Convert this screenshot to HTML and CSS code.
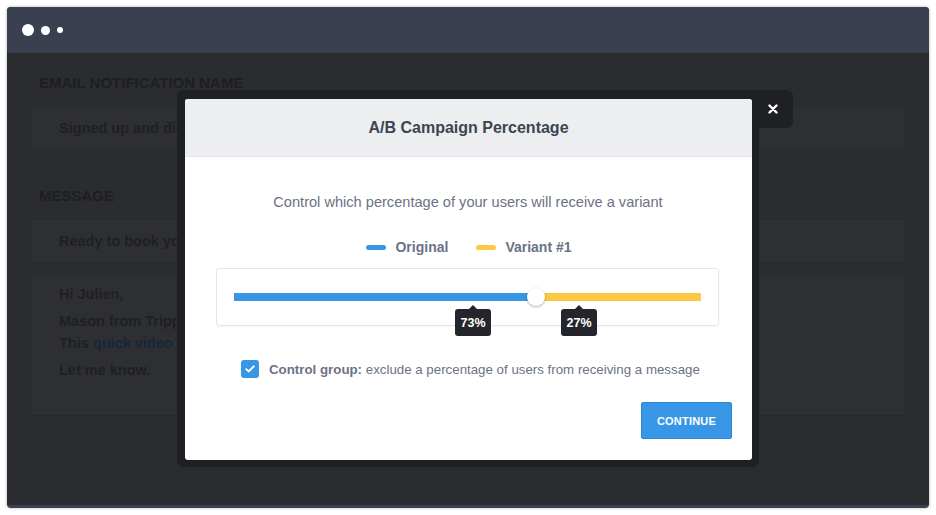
FILE: index.html
```html
<!DOCTYPE html>
<html lang="en">
<head>
    <meta charset="UTF-8">
    <title>A/B Campaign Percentage</title>
    <link rel="stylesheet" href="styles.css">
</head>
<body>
    <div class="window">
        <div class="titlebar">
            <span class="dot big"></span>
            <span class="dot mid"></span>
            <span class="dot small"></span>
        </div>
        <div class="content">
            <div class="section">
                <div class="label">Email notification name</div>
                <div class="field">Signed up and did not book a trip</div>
            </div>
            <div class="section">
                <div class="label">Message</div>
                <div class="field">Ready to book your trip?</div>
                <div class="field big">
                    <p>Hi Julien,</p>
                    <p class="tight">Mason from Trippy here. Thanks for signing up!</p>
                    <p>This <span class="link">quick video</span> will show you how to book in minutes.</p>
                    <p>Let me know.</p>
                </div>
            </div>

            <div class="modal-frame">
                <div class="close-tab">
                    <svg width="10" height="10" viewBox="0 0 10 10"><path d="M1.5 1.5 L8.5 8.5 M8.5 1.5 L1.5 8.5" stroke="#fff" stroke-width="2.4" stroke-linecap="round"/></svg>
                </div>
                <div class="modal">
                    <div class="modal-header">A/B Campaign Percentage</div>
                    <div class="modal-body">
                        <div class="subtitle">Control which percentage of your users will receive a variant</div>
                        <div class="legend">
                            <span class="legend-item"><span class="pill blue"></span>Original</span>
                            <span class="legend-item"><span class="pill yellow"></span>Variant #1</span>
                        </div>
                        <div class="slider-card">
                            <div class="track">
                                <div class="fill" style="width: 64.7%"></div>
                                <div class="thumb" style="left: 64.7%"></div>
                                <div class="tip" style="left: 51.2%">73%</div>
                                <div class="tip" style="left: 73.9%">27%</div>
                            </div>
                        </div>
                        <label class="check-row">
                            <span class="checkbox">
                                <svg width="10" height="8" viewBox="0 0 10 8"><path d="M1.3 4.2 L3.8 6.4 L8.7 1.4" fill="none" stroke="#fff" stroke-width="2" stroke-linecap="round" stroke-linejoin="round"/></svg>
                            </span>
                            <span><b>Control group:</b> exclude a percentage of users from receiving a message</span>
                        </label>
                        <div class="actions">
                            <button class="btn">CONTINUE</button>
                        </div>
                    </div>
                </div>
            </div>
        </div>
    </div>
</body>
</html>
```

FILE: styles.css
```css
body {
    margin: 0;
    background-color: #fff;
    font-family: "Liberation Sans", Arial, sans-serif;
}
.window {
    margin: 7px;
    width: 922px;
    height: 498px;
    border-radius: 4px;
    background-color: #2b2c30;
    border-bottom: 3px solid #3b4151;
    box-shadow: 0 0 3px rgba(0, 0, 0, 0.35);
    overflow: hidden;
}
.titlebar {
    height: 46px;
    background-color: #3a4050;
    display: flex;
    align-items: center;
    padding-left: 15px;
    gap: 7px;
}
.dot {
    background-color: #fff;
    border-radius: 50%;
}
.dot.big { width: 12px; height: 12px; }
.dot.mid { width: 9px; height: 9px; }
.dot.small { width: 6px; height: 6px; }
.content {
    position: relative;
    padding: 0 23px;
}
.section {
    padding: 22px 23px 20px;
    border-bottom: 1px solid #27282b;
    margin: 0 -23px;
}
.section + .section {
    border-bottom: none;
    padding-top: 17px;
}
.label {
    font-size: 15px;
    line-height: 16px;
    font-weight: bold;
    text-transform: uppercase;
    color: #1d1e21;
    padding-left: 9px;
    margin-bottom: 15px;
}
.field {
    background-color: #2e2f33;
    border: 1px solid #28292c;
    border-radius: 3px;
    box-sizing: border-box;
    height: 44px;
    padding: 0 28px;
    display: flex;
    align-items: center;
    font-size: 14.5px;
    font-weight: bold;
    color: #1f2023;
}
.field + .field {
    margin-top: 11px;
}
.field.big {
    display: block;
    height: 142px;
    padding-top: 11px;
}
.field.big p {
    margin: 0 0 10px;
    line-height: 17px;
}
.field.big p.tight {
    margin-bottom: 5px;
}
.link {
    color: #16273a;
}

/* modal */
.modal-frame {
    position: absolute;
    left: 170px;
    top: 37px;
    width: 567px;
    padding: 9px 7px 7px 8px;
    background-color: #1f2024;
    border-radius: 6px 0 6px 6px;
}
.close-tab {
    position: absolute;
    left: 100%;
    top: 0;
    width: 34px;
    height: 38px;
    background-color: #1f2024;
    border-radius: 0 6px 6px 0;
    display: flex;
    align-items: center;
    justify-content: center;
    padding-right: 6px;
    box-sizing: border-box;
}
.modal {
    background-color: #fff;
    border-radius: 3px;
    overflow: hidden;
    height: 361px;
}
.modal-header {
    height: 57px;
    background-color: #eceef0;
    border-bottom: 1px solid #e2e5e9;
    display: flex;
    align-items: center;
    justify-content: center;
    font-size: 16px;
    font-weight: bold;
    color: #3d4452;
}
.modal-body {
    padding: 37px 20px 0 31px;
}
.subtitle {
    text-align: center;
    font-size: 14.6px;
    line-height: 16px;
    color: #6b7286;
    padding-right: 12px;
}
.legend {
    display: flex;
    justify-content: center;
    gap: 28px;
    margin-top: 29px;
    font-size: 14px;
    line-height: 16px;
    font-weight: bold;
    color: #6b7286;
    padding-right: 10px;
}
.legend-item {
    display: flex;
    align-items: center;
    gap: 9px;
}
.pill {
    width: 20px;
    height: 5px;
    border-radius: 3px;
}
.pill.blue { background-color: #3896e7; }
.pill.yellow { background-color: #fdc843; }
.slider-card {
    margin-top: 13px;
    width: 503px;
    height: 58px;
    box-sizing: border-box;
    border: 1px solid #e2e7ee;
    border-radius: 3px;
    box-shadow: 0 1px 2px rgba(0, 0, 0, 0.04);
    padding: 24px 17px 0;
}
.track {
    position: relative;
    height: 8px;
    background-color: #fdc843;
}
.fill {
    height: 100%;
    background-color: #3896e7;
}
.thumb {
    position: absolute;
    top: 50%;
    width: 18px;
    height: 18px;
    margin: -9px 0 0 -9px;
    border-radius: 50%;
    background-color: #fff;
    box-shadow: 0 1px 3px rgba(0, 0, 0, 0.3);
}
.tip {
    position: absolute;
    top: 16px;
    width: 36px;
    height: 27px;
    margin-left: -18px;
    background-color: #25262b;
    border-radius: 3px;
    color: #fff;
    font-size: 12.5px;
    font-weight: bold;
    display: flex;
    align-items: center;
    justify-content: center;
}
.tip::before {
    content: "";
    position: absolute;
    top: -4px;
    left: 50%;
    margin-left: -4px;
    border-left: 4px solid transparent;
    border-right: 4px solid transparent;
    border-bottom: 4px solid #25262b;
}
.check-row {
    display: flex;
    align-items: center;
    gap: 10px;
    margin-top: 34px;
    padding-left: 25px;
    font-size: 13.3px;
    color: #6b7286;
}
.checkbox {
    width: 18px;
    height: 18px;
    border-radius: 3px;
    background-color: #3896e7;
    display: flex;
    align-items: center;
    justify-content: center;
}
.actions {
    display: flex;
    justify-content: flex-end;
    margin-top: 24px;
}
.btn {
    width: 91px;
    height: 37px;
    background-color: #3896e7;
    border: 1px solid #2f87d6;
    border-radius: 2px;
    color: #fff;
    font-family: "Liberation Sans", Arial, sans-serif;
    font-size: 11px;
    font-weight: bold;
    letter-spacing: 0.2px;
    cursor: pointer;
}
```
